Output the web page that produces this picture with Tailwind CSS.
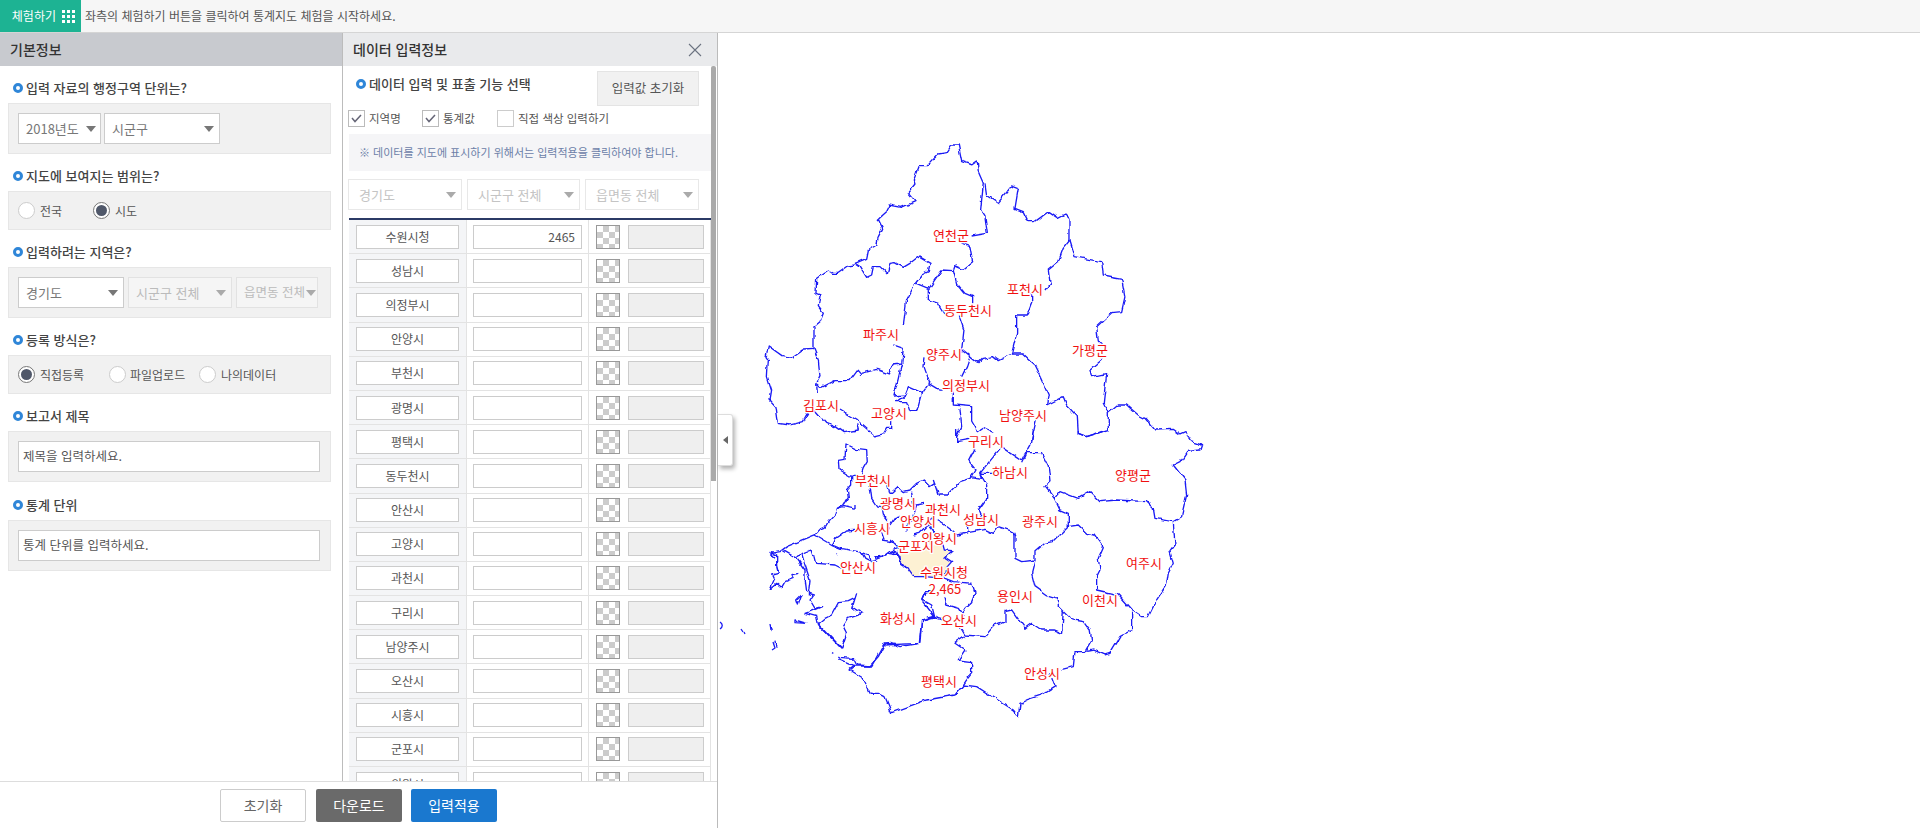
<!DOCTYPE html>
<html lang="ko">
<head>
    <meta charset="UTF-8">
    <title>통계지도 체험</title>
    <script src="https://cdn.jsdelivr.net/npm/@tailwindcss/browser@4"></script>
</head>
<body class="h-[828px] overflow-hidden bg-white font-['Noto_Sans_CJK_KR','Noto_Sans',sans-serif] text-[13px] text-[#555]">
    <!-- 상단 바 -->
    <div class="flex h-[33px] items-stretch border-b border-[#d5d5d5] bg-[#f6f6f6] text-[12px]">
        <div class="flex w-[81px] items-center justify-end gap-[6px] bg-[#1db393] pr-[6px] text-white">
            <span>체험하기</span>
            <div class="grid grid-cols-3 gap-[2px]">
                <i class="h-[3px] w-[3px] bg-white"></i><i class="h-[3px] w-[3px] bg-white"></i><i class="h-[3px] w-[3px] bg-white"></i>
                <i class="h-[3px] w-[3px] bg-white"></i><i class="h-[3px] w-[3px] bg-white"></i><i class="h-[3px] w-[3px] bg-white"></i>
                <i class="h-[3px] w-[3px] bg-white"></i><i class="h-[3px] w-[3px] bg-white"></i><i class="h-[3px] w-[3px] bg-white"></i>
            </div>
        </div>
        <div class="flex items-center pl-[4px]">좌측의 체험하기 버튼을 클릭하여 통계지도 체험을 시작하세요.</div>
    </div>

    <div class="flex h-[795px]">
        <div class="flex w-[718px] flex-col border-r border-[#bbb]">
            <div class="flex min-h-0 flex-1">
                <!-- 기본정보 -->
                <div class="w-[343px] border-r border-[#bcbcbc]">
                    <div class="flex h-[33px] items-center bg-[#c8cacf] pl-[10px] text-[14px] font-medium text-[#333]">기본정보</div>

                    <div class="flex h-[37px] items-center gap-[3px] pl-[13px] pt-[7px] font-medium text-[#444]"><i class="h-[10px] w-[10px] rounded-full border-[3px] border-[#2f86d8] bg-white"></i>입력 자료의 행정구역 단위는?</div>
                    <div class="mx-[8px] flex h-[51px] w-[323px] items-center gap-[3px] border border-[#e6e6e6] bg-[#f1f1f1] pl-[9px]">
                        <div class="flex h-[31px] w-[83px] items-center justify-between border border-[#ccc] bg-white pl-[7px] pr-[4px] text-[#777]">2018년도<svg width="10" height="6"><path d="M0 0H10L5 6Z" fill="#777"/></svg></div>
                        <div class="flex h-[31px] w-[116px] items-center justify-between border border-[#ccc] bg-white pl-[7px] pr-[5px] text-[#777]">시군구<svg width="10" height="6"><path d="M0 0H10L5 6Z" fill="#777"/></svg></div>
                    </div>

                    <div class="flex h-[37px] items-center gap-[3px] pl-[13px] pt-[7px] font-medium text-[#444]"><i class="h-[10px] w-[10px] rounded-full border-[3px] border-[#2f86d8] bg-white"></i>지도에 보여지는 범위는?</div>
                    <div class="mx-[8px] flex h-[39px] w-[323px] items-center border border-[#e6e6e6] bg-[#f1f1f1] pl-[9px] text-[12px]">
                        <i class="h-[17px] w-[17px] rounded-full border border-[#ccc] bg-white"></i><span class="ml-[5px] w-[53px]">전국</span>
                        <i class="flex h-[17px] w-[17px] items-center justify-center rounded-full border border-[#777] bg-white"><b class="h-[11px] w-[11px] rounded-full bg-[#50586a]"></b></i><span class="ml-[5px]">시도</span>
                    </div>

                    <div class="flex h-[37px] items-center gap-[3px] pl-[13px] pt-[7px] font-medium text-[#444]"><i class="h-[10px] w-[10px] rounded-full border-[3px] border-[#2f86d8] bg-white"></i>입력하려는 지역은?</div>
                    <div class="mx-[8px] flex h-[51px] w-[323px] items-center gap-[4px] border border-[#e6e6e6] bg-[#f1f1f1] pl-[9px]">
                        <div class="flex h-[31px] w-[106px] items-center justify-between border border-[#ccc] bg-white pl-[7px] pr-[5px] text-[#777]">경기도<svg width="10" height="6"><path d="M0 0H10L5 6Z" fill="#777"/></svg></div>
                        <div class="flex h-[31px] w-[104px] items-center justify-between border border-[#e2e2e2] bg-[#f5f5f5] pl-[7px] pr-[5px] text-[#bbb]">시군구 전체<svg width="10" height="6"><path d="M0 0H10L5 6Z" fill="#aaa"/></svg></div>
                        <div class="flex h-[31px] w-[82px] items-center justify-between border border-[#e2e2e2] bg-[#f5f5f5] pl-[7px] pr-[1px] text-[12.5px] text-[#bbb]"><span class="whitespace-nowrap">읍면동 전체</span><svg class="shrink-0" width="10" height="6"><path d="M0 0H10L5 6Z" fill="#aaa"/></svg></div>
                    </div>

                    <div class="flex h-[37px] items-center gap-[3px] pl-[13px] pt-[7px] font-medium text-[#444]"><i class="h-[10px] w-[10px] rounded-full border-[3px] border-[#2f86d8] bg-white"></i>등록 방식은?</div>
                    <div class="mx-[8px] flex h-[39px] w-[323px] items-center border border-[#e6e6e6] bg-[#f1f1f1] pl-[9px] text-[12px]">
                        <i class="flex h-[17px] w-[17px] items-center justify-center rounded-full border border-[#777] bg-white"><b class="h-[11px] w-[11px] rounded-full bg-[#50586a]"></b></i><span class="ml-[5px] w-[69px]">직접등록</span>
                        <i class="h-[17px] w-[17px] rounded-full border border-[#ccc] bg-white"></i><span class="ml-[4px] w-[69px]">파일업로드</span>
                        <i class="h-[17px] w-[17px] rounded-full border border-[#ccc] bg-white"></i><span class="ml-[5px]">나의데이터</span>
                    </div>

                    <div class="flex h-[37px] items-center gap-[3px] pl-[13px] pt-[7px] font-medium text-[#444]"><i class="h-[10px] w-[10px] rounded-full border-[3px] border-[#2f86d8] bg-white"></i>보고서 제목</div>
                    <div class="mx-[8px] flex h-[51px] w-[323px] items-center border border-[#e6e6e6] bg-[#f1f1f1] pl-[9px]">
                        <div class="flex h-[31px] w-[302px] items-center border border-[#ccc] bg-white pl-[4px] text-[12.5px]">제목을 입력하세요.</div>
                    </div>

                    <div class="flex h-[38px] items-center gap-[3px] pl-[13px] pt-[7px] font-medium text-[#444]"><i class="h-[10px] w-[10px] rounded-full border-[3px] border-[#2f86d8] bg-white"></i>통계 단위</div>
                    <div class="mx-[8px] flex h-[51px] w-[323px] items-center border border-[#e6e6e6] bg-[#f1f1f1] pl-[9px]">
                        <div class="flex h-[31px] w-[302px] items-center border border-[#ccc] bg-white pl-[4px] text-[12.5px]">통계 단위를 입력하세요.</div>
                    </div>
                </div>

                <!-- 데이터 입력정보 -->
                <div class="flex w-[374px] flex-col">
                    <div class="flex h-[33px] shrink-0 items-center justify-between bg-[#e9eaec] pl-[10px] pr-[15px] text-[14px] font-medium text-[#333]">데이터 입력정보
                        <svg width="14" height="14" viewBox="0 0 14 14"><path d="M1 1L13 13M13 1L1 13" stroke="#6b7280" stroke-width="1.1" fill="none"/></svg>
                    </div>
                    <div class="relative min-h-0 flex-1 overflow-hidden pl-[5px]">
                        <div class="absolute right-[1px] top-0 h-[415px] w-[5px] rounded-t-[2px] bg-[#aaa]"></div>
                        <div class="flex h-[44px] items-start justify-between pr-[18px] pt-[5px]">
                            <div class="flex items-center gap-[3px] pl-[8px] pt-[3px] font-medium text-[#444]"><i class="h-[10px] w-[10px] rounded-full border-[3px] border-[#2f86d8] bg-white"></i>데이터 입력 및 표출 기능 선택</div>
                            <div class="flex h-[35px] w-[102px] items-center justify-center border border-[#e4e4e4] bg-[#f1f1f1] text-[12.5px] text-[#555]">입력값 초기화</div>
                        </div>
                        <div class="flex h-[24px] items-start text-[11.5px]">
                            <i class="flex h-[17px] w-[17px] items-center justify-center border border-[#bbb] bg-white"><svg width="11" height="9" viewBox="0 0 11 9"><path d="M1 4L4 7.5L10 1" stroke="#667" stroke-width="1.5" fill="none"/></svg></i><span class="ml-[4px] w-[53px]">지역명</span>
                            <i class="flex h-[17px] w-[17px] items-center justify-center border border-[#bbb] bg-white"><svg width="11" height="9" viewBox="0 0 11 9"><path d="M1 4L4 7.5L10 1" stroke="#667" stroke-width="1.5" fill="none"/></svg></i><span class="ml-[4px] w-[54px]">통계값</span>
                            <i class="h-[17px] w-[17px] border border-[#ccc] bg-white"></i><span class="ml-[4px]">직접 색상 입력하기</span>
                        </div>
                        <div class="ml-[1px] flex h-[37px] w-[362px] items-center bg-[#f5f5f7] pl-[10px] text-[11px] text-[#6c80a8]">※ 데이터를 지도에 표시하기 위해서는 입력적용을 클릭하여야 합니다.</div>
                        <div class="mt-[8px] flex h-[31px] gap-[5px]">
                            <div class="flex w-[114px] items-center justify-between border border-[#e8e8e8] pl-[10px] pr-[5px] text-[#c4c4c4]">경기도<svg width="10" height="6"><path d="M0 0H10L5 6Z" fill="#aaa"/></svg></div>
                            <div class="flex w-[113px] items-center justify-between border border-[#e8e8e8] pl-[10px] pr-[5px] text-[#c4c4c4]">시군구 전체<svg width="10" height="6"><path d="M0 0H10L5 6Z" fill="#aaa"/></svg></div>
                            <div class="flex w-[114px] items-center justify-between border border-[#e8e8e8] pl-[10px] pr-[5px] text-[#c4c4c4]">읍면동 전체<svg width="10" height="6"><path d="M0 0H10L5 6Z" fill="#aaa"/></svg></div>
                        </div>
                        <div id="rows" class="ml-[1px] mt-[8px] w-[362px] border-t-2 border-[#2b3a66]"></div>
                    </div>
                </div>
            </div>
            <!-- 하단 버튼 -->
            <div class="flex h-[47px] shrink-0 items-start gap-[10px] border-t border-[#ddd] pl-[220px] pt-[7px] text-[14px]">
                <div class="flex h-[33px] w-[86px] items-center justify-center rounded-[2px] border border-[#ccc] bg-white text-[#666]">초기화</div>
                <div class="flex h-[33px] w-[86px] items-center justify-center rounded-[2px] bg-[#6a6a6a] text-white">다운로드</div>
                <div class="-ml-px flex h-[33px] w-[86px] items-center justify-center rounded-[2px] bg-[#1a78cf] text-white">입력적용</div>
            </div>
        </div>

        <!-- 지도 -->
        <div class="relative flex-1">
            <div class="absolute left-0 top-[381px] z-10 flex h-[52px] w-[15px] items-center justify-center rounded-r-[3px] border border-l-0 border-[#ddd] bg-white shadow-[2px_3px_4px_rgba(0,0,0,0.3)]">
                <svg width="5" height="8"><path d="M5 0V8L0 4Z" fill="#666"/></svg>
            </div>
            <svg class="h-full w-full" viewBox="718 33 1202 795" fill="none" stroke="#1a1af5" stroke-linejoin="round">
                <defs>
                    <filter id="rough" filterUnits="userSpaceOnUse" x="718" y="33" width="1202" height="795" color-interpolation-filters="sRGB">
                        <feTurbulence type="fractalNoise" baseFrequency="0.11" numOctaves="2" seed="4"/>
                        <feDisplacementMap in="SourceGraphic" scale="5" xChannelSelector="R" yChannelSelector="G"/>
                    </filter>
                </defs>
                <path fill="#fdf1d3" stroke="none" d="M899 555 900 563 906 567 913 577 923 577 945 578 945 570 952 563 945 558 953 550 943 550 942 543Z"/>
                <!-- 작은 섬 -->
                <path stroke-width="1.3" d="M720 622C723 624 723 627 720 629M741 629 743 632M744 632 745 634M770 624 771 630M773 642 775 648 772 650"/>
                <g filter="url(#rough)">
                <g transform="translate(720 430) scale(0.3333)" stroke-width="4">
                    <path d="M1415 35 1445 45 1440 60 1400 65 1380 95 1360 105 1395 150 1400 195 1385 260 1360 275 1305 265 1300 235 1280 215 1190 210 1140 215 1110 185 1075 205 1020 185 1003 205 975 170 990 155 985 110 965 68 920 68 905 100"/>
                    <path d="M940 0 935 35 905 90 890 80 845 50"/>
                    <path d="M1075 0 1075 10 1100 20 1160 0"/>
                    <path d="M710 0 710 35 745 28M845 50 780 130 800 165 800 205 775 240 785 265M765 55 745 95 765 120 750 145 720 155 680 195 655 195 640 150"/>
                    <path d="M750 140 785 145 780 130 820 130"/>
                    <path d="M885 305 885 385 905 395 945 390 945 365 975 340 1000 335 1045 290 1045 250 1020 240 1003 205"/>
                    <path d="M1045 290 1075 285 1100 310 1125 315 1150 350 1135 385 1140 420 1130 440 1130 480 1195 495 1235 540 1235 600 1200 620 1170 670 1155 675 1120 660 1095 665 1115 630 1110 600 1090 572 1050 565 1030 545 1015 530 1015 505 980 495 945 470 935 430 945 390"/>
                    <path d="M1360 275 1365 345 1350 365 1360 400 1345 430 1340 465 1310 510 1285 560 1265 560 1235 540"/>
                    <path d="M1030 545 1025 610 1000 600 965 600 935 580 915 595 875 540 855 545 855 575 820 590 795 620 735 615 720 590"/>
                    <path d="M1095 665 1065 665 1060 710 1020 720M990 730 1005 770 965 795 920 810 900 820 895 860 880 840 810 795 770 770 730 765 705 795 620 810 515 848 495 800 475 790 450 790 430 745 390 720 405 708 455 708 490 645 600 640 605 570 640 562 665 570"/>
                    <path d="M735 620 705 640 735 660 715 690 755 695 755 730 740 750 730 765"/>
                    <path d="M405 708 355 685"/>
                </g>
                <!-- 서부 해안 -->
                <g transform="translate(760 440) scale(0.3333)" stroke-width="4">
                    <path d="M290 110 270 108 240 90 238 58 255 55 258 12 290 28 320 32 322 65 310 85 305 100"/>
                    <path d="M275 110 275 135 262 150 265 170 248 195 232 205 228 220 205 245 195 262 180 268 165 285 80 320 60 335 30 340 45 355"/>
                    <path d="M232 205 250 200 285 208 285 195M330 135 335 175 350 198 365 200 370 225 382 240 385 265"/>
                    <path d="M165 285 215 315 240 325 295 335 325 345 330 360M215 315 225 295 240 285 260 270 285 268"/>
                    <path d="M380 125 390 160 395 160 415 142 430 155 450 150 470 130 490 120 510 140 525 130"/>
                    <path d="M455 155 460 190 470 195 495 190M470 195 455 240 440 255 438 275M390 255 405 232 418 228"/>
                    <path d="M365 275 372 295 365 300 395 305 415 320M350 355 385 340 415 345 420 360"/>
                </g>
                <g transform="translate(760 550) scale(0.3333)" stroke-width="4">
                    <path d="M30 8 50 15 50 50 55 70 35 75 42 90 30 118 50 100 65 112 75 95 100 85 95 75 115 70"/>
                    <path d="M70 2 110 25 125 10 150 0 155 15 165 20 170 40 225 45 245 55"/>
                    <path d="M125 10 135 45 150 90 145 130 160 135 150 150 165 175 185 170 150 185 135 190 170 200 175 222M110 25 135 60 135 85 140 125"/>
                    <path d="M175 222 245 295" stroke-width="6"/>
                    <path d="M245 295 260 250 250 230 265 205 295 195 305 188 285 175 275 178 290 130M175 222 195 205 215 195 235 158 265 155 285 145"/>
                    <path d="M235 318 240 322 280 325 290 345 330 348M270 355 285 345"/>
                    <path d="M330 348 355 320 375 282 395 280 420 290 478 280 485 210 520 200 530 205M515 125 495 125 485 148 515 165 525 205"/>
                    <path d="M105 210 140 220 105 218ZM110 150 125 135 115 165ZM28 225 34 240M45 275 48 293M213 308 217 310M230 10 234 14M270 78 274 80"/>
                    <path d="M300 0 315 25 335 35 350 30 345 20 365 20 385 5 410 5 420 30 435 50"/>
                </g>
                <!-- 수원 주변 -->
                <g transform="translate(890 480) scale(0.3333)" stroke-width="4">
                    <path d="M0 180 10 190 25 205 0 215 30 230 32 250 50 262 70 290 100 290 165 295 190 305 245 310 255 340 245 365 225 385 215 400"/>
                    <path d="M140 120 165 135 205 165 230 158 230 135M230 158 285 148 310 160 325 140 370 155 378 165"/>
                    <path d="M130 110 115 135 135 155M70 165 90 160 115 135 125 145 150 180"/>
                    <path d="M155 190 160 210 190 212 165 235 185 248 170 265 165 295"/>
                    <path d="M105 335 95 360 130 405 135 415M165 350 170 375 205 385 220 410"/>
                </g>
                <g transform="translate(740 130) scale(0.3333)" stroke-width="4">
                    <path d="M345 400 380 385 385 360 410 345 415 320 428 295 415 268 440 245 450 225 485 232 525 215 505 190 525 165 520 150 535 110 560 110 595 72 620 68 635 45 655 45 665 95 695 105 712 93 715 125 730 160 722 240 735 260 742 310 695 318M668 340 690 350 698 395 670 418 645 408 640 422 605 420 565 478"/>
                    <path d="M345 400 360 410 380 442 395 435 400 410 420 410 442 432 450 400 465 398 490 412 510 400 535 380 570 400 565 425 545 435 525 462 565 478"/>
                    <path d="M345 405 325 408 295 430 280 430 265 420 230 445 228 490 240 495 235 530 250 550 240 575 222 590 222 658 235 690 240 740 230 760 245 772 285 752 330 752 355 718 365 730 410 718 445 732 460 705 485 702 490 655 460 645M490 585 500 510 525 462"/>
                    <path d="M222 658 190 660 155 685 130 680 85 648 78 680 85 690 82 740 95 780 90 810 108 830 115 880 150 885 170 880 190 875 205 848M225 840 260 880 285 890 310 908 355 900 350 880M300 840 350 870 405 918 430 912 440 895 455 895 455 870M230 760 232 790"/>
                    <path d="M485 702 475 745 462 798 495 795 505 770 545 788 565 760 590 775 605 778M555 685 552 710 570 760M545 788 530 845 510 845 500 815 470 815 495 795"/>
                    <path d="M565 478 565 510 595 520 615 552M640 422 650 460 675 490 698 500 698 520"/>
                    <path d="M658 560 672 600 665 660 690 680 715 700 730 685 760 680 775 692 815 672 830 610 830 555 862 555 875 520 875 490"/>
                    <path d="M915 480 930 460 925 420 955 395 970 355 990 330 990 270 975 255 955 265 925 245 885 275 865 275 850 245 825 235 835 175 815 168 775 218 740 195 735 160"/>
                    <path d="M990 330 1005 380 1085 395 1090 435 1145 445 1155 500 1145 545 1115 548 1070 590 1075 630 1085 640M1085 690 1050 720 1055 740 1100 730 1090 820 1105 850 1105 900 1040 920 1015 910 1012 860 980 825 970 800 920 825 925 795 900 740 880 700 850 672 815 672"/>
                    <path d="M690 680 680 710 665 740M640 785 640 825 695 830 695 870 715 905 730 895 760 910M660 835 665 890 650 920M890 865 875 930"/>
                    <path d="M1105 850 1135 825 1160 825 1195 855 1215 865 1245 900 1300 898 1320 912 1335 905 1355 935"/>
                </g>
                </g>
                <g fill="#f01010" stroke="#fff" stroke-width="2.5" paint-order="stroke" text-anchor="middle" dominant-baseline="central" font-size="13">
                    <text x="951" y="234">연천군</text>
                    <text x="1025" y="288">포천시</text>
                    <text x="968" y="309">동두천시</text>
                    <text x="881" y="333">파주시</text>
                    <text x="1090" y="349">가평군</text>
                    <text x="944" y="353">양주시</text>
                    <text x="966" y="384">의정부시</text>
                    <text x="821" y="404">김포시</text>
                    <text x="889" y="412">고양시</text>
                    <text x="1023" y="414">남양주시</text>
                    <text x="986" y="440">구리시</text>
                    <text x="1010" y="471">하남시</text>
                    <text x="1133" y="474">양평군</text>
                    <text x="873" y="479">부천시</text>
                    <text x="898" y="502">광명시</text>
                    <text x="943" y="508">과천시</text>
                    <text x="981" y="518">성남시</text>
                    <text x="1040" y="520">광주시</text>
                    <text x="918" y="520">안양시</text>
                    <text x="872" y="527">시흥시</text>
                    <text x="939" y="537">의왕시</text>
                    <text x="916" y="545">군포시</text>
                    <text x="1144" y="562">여주시</text>
                    <text x="858" y="566">안산시</text>
                    <text x="944" y="571">수원시청</text>
                    <text x="945" y="588">2,465</text>
                    <text x="1015" y="595">용인시</text>
                    <text x="1100" y="599">이천시</text>
                    <text x="898" y="617">화성시</text>
                    <text x="959" y="619">오산시</text>
                    <text x="1042" y="672">안성시</text>
                    <text x="939" y="680">평택시</text>
                </g>
            </svg>
        </div>
    </div>

    <script>
        const names = ['수원시청','성남시','의정부시','안양시','부천시','광명시','평택시','동두천시','안산시','고양시','과천시','구리시','남양주시','오산시','시흥시','군포시','의왕시'];
        let html = '';
        names.forEach((name, i) => {
            html += `<div class="flex h-[34.2px] border-b border-[#e3e3e3]">
                <div class="flex w-[118px] items-center justify-center border-r border-[#e3e3e3] bg-[#f4f5f7]"><div class="flex h-[24px] w-[103px] items-center justify-center border border-[#ccc] bg-white text-[12px]">${name}</div></div>
                <div class="flex w-[122px] items-center justify-center border-r border-[#e3e3e3]"><div class="flex h-[24px] w-[109px] items-center justify-end border border-[#ccc] bg-white pr-[6px] text-[12px]">${i === 0 ? '2465' : ''}</div></div>
                <div class="flex flex-1 items-center gap-[8px] border-r border-[#e3e3e3] pl-[7px]">
                    <div class="h-[24px] w-[24px] border border-[#999] bg-[conic-gradient(#ccc_25%,#fff_0_50%,#ccc_0_75%,#fff_0)] bg-[length:12px_12px]"></div>
                    <div class="h-[24px] w-[76px] border border-[#ccc] bg-[#efefef]"></div>
                </div>
            </div>`;
        });
        document.getElementById('rows').innerHTML = html;
    </script>
</body>
</html>
